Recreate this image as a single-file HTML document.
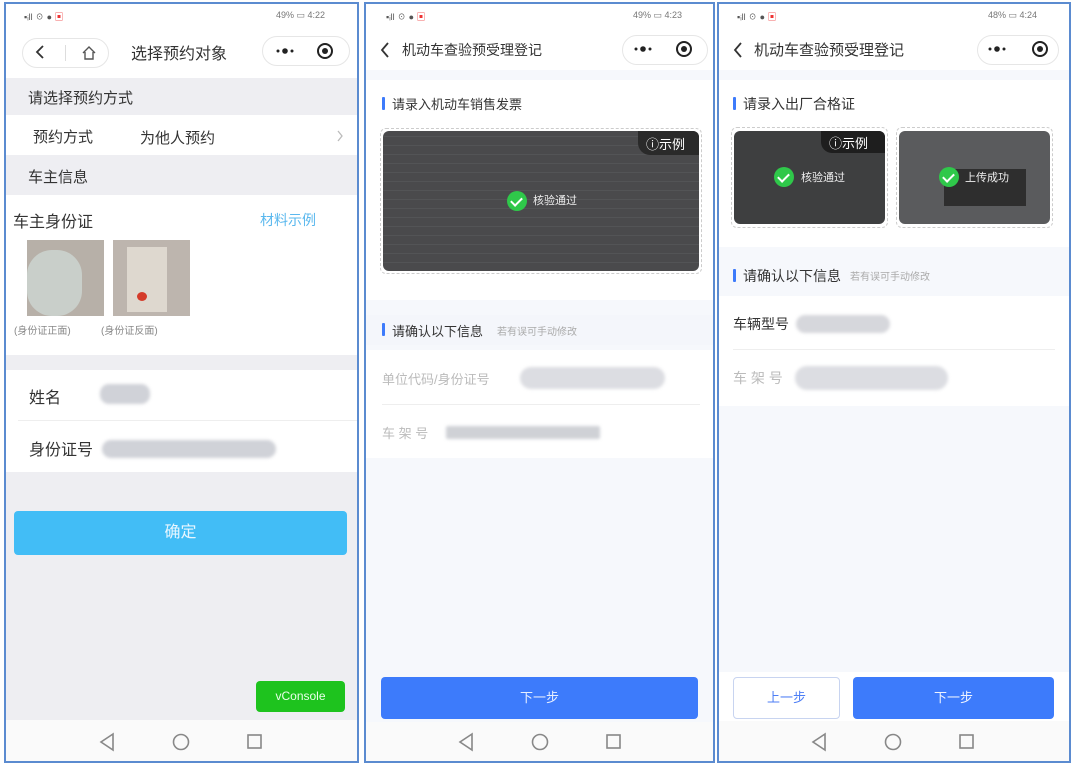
<!DOCTYPE html>
<html><head><meta charset="utf-8"><style>
*{margin:0;padding:0;box-sizing:border-box}
body{width:1077px;height:764px;background:#fff;position:relative;overflow:hidden;font-family:"Liberation Sans","Noto Sans CJK SC",sans-serif;color:#333}
.a{position:absolute}
.p{position:absolute;border:2px solid #5b8bd0;overflow:hidden}
.t{position:absolute;white-space:nowrap}
.blur{position:absolute;background:#d0d2d8;border-radius:9px;filter:blur(1.5px)}
.cap{position:absolute;height:30px;border:1px solid #e6e6e6;border-radius:15px;background:#fff}
.bar{position:absolute;width:3px;height:13px;background:#3d7bfb;border-radius:1px}
.chk{position:absolute;width:20px;height:20px;border-radius:50%;background:#2fc84a}
.chk:after{content:"";position:absolute;left:6px;top:4px;width:5px;height:9px;border:solid #fff;border-width:0 2px 2px 0;transform:rotate(45deg)}
</style></head><body>

<!-- PANEL 1 -->
<div class="p" style="left:4px;top:2px;width:355px;height:761px;background:#eeeef2"></div>
<div class="a" style="left:6px;top:4px;width:351px;height:74px;background:#fff"></div>
<div class="t" style="left:24px;top:10px;font-size:9px;color:#555">▪︎ᵢll ☉ ● <span style="color:#e33">▣</span></div>
<div class="t" style="left:276px;top:10px;font-size:9px;color:#777">49% ▭ 4:22</div>
<div class="cap" style="left:22px;top:38px;width:87px"></div>
<div class="a" style="left:65px;top:45px;width:1px;height:16px;background:#ddd"></div>
<div class="t" style="left:131px;top:40px;font-size:16px;color:#333">选择预约对象</div>
<div class="cap" style="left:262px;top:36px;width:88px"></div>
<div class="t" style="left:28px;top:87px;font-size:15px;color:#333">请选择预约方式</div>
<div class="a" style="left:6px;top:115px;width:351px;height:40px;background:#fff"></div>
<div class="t" style="left:33px;top:126px;font-size:15px">预约方式</div>
<div class="t" style="left:140px;top:127px;font-size:15px">为他人预约</div>
<div class="t" style="left:28px;top:166px;font-size:15px">车主信息</div>
<div class="a" style="left:6px;top:195px;width:351px;height:160px;background:#fff"></div>
<div class="t" style="left:13px;top:208px;font-size:16px">车主身份证</div>
<div class="t" style="left:260px;top:210px;font-size:14px;color:#5ab8ee">材料示例</div>
<div class="a" style="left:27px;top:240px;width:77px;height:76px;background:#b7b0a8"></div>
<div class="a" style="left:27px;top:250px;width:55px;height:66px;background:#c9cfca;border-radius:25px"></div>
<div class="a" style="left:113px;top:240px;width:77px;height:76px;background:#bdb5ae"></div>
<div class="a" style="left:127px;top:247px;width:40px;height:65px;background:#ded8cf"></div>
<div class="a" style="left:137px;top:292px;width:10px;height:9px;background:#d43b2a;border-radius:50%"></div>
<div class="t" style="left:14px;top:322px;font-size:10px;color:#888">(身份证正面)</div>
<div class="t" style="left:101px;top:322px;font-size:10px;color:#888">(身份证反面)</div>
<div class="a" style="left:6px;top:370px;width:351px;height:102px;background:#fff"></div>
<div class="a" style="left:18px;top:420px;width:339px;height:1px;background:#eee"></div>
<div class="t" style="left:29px;top:384px;font-size:16px">姓名</div>
<div class="blur" style="left:100px;top:384px;width:50px;height:20px"></div>
<div class="t" style="left:29px;top:436px;font-size:16px">身份证号</div>
<div class="blur" style="left:102px;top:440px;width:174px;height:18px"></div>
<div class="a" style="left:14px;top:511px;width:333px;height:44px;background:#42bdf6;border-radius:4px;color:#e8f6ff;font-size:16px;text-align:center;line-height:44px">确定</div>
<div class="a" style="left:256px;top:681px;width:89px;height:31px;background:#1ec31e;border-radius:4px;color:#e9ffe9;font-size:12px;text-align:center;line-height:31px">vConsole</div>
<div class="a" style="left:6px;top:720px;width:351px;height:41px;background:#fafafa"></div>

<!-- PANEL 2 -->
<div class="p" style="left:364px;top:2px;width:351px;height:761px;background:#f6f8fc"></div>
<div class="a" style="left:366px;top:4px;width:347px;height:66px;background:#fff"></div>
<div class="t" style="left:386px;top:10px;font-size:9px;color:#555">▪︎ᵢll ☉ ● <span style="color:#e33">▣</span></div>
<div class="t" style="left:633px;top:10px;font-size:9px;color:#777">49% ▭ 4:23</div>
<div class="t" style="left:402px;top:40px;font-size:14px;color:#333">机动车查验预受理登记</div>
<div class="cap" style="left:622px;top:35px;width:86px"></div>
<div class="a" style="left:366px;top:80px;width:347px;height:220px;background:#fff"></div>
<div class="bar" style="left:382px;top:97px"></div>
<div class="t" style="left:392px;top:94px;font-size:13px;color:#333">请录入机动车销售发票</div>
<div class="a" style="left:380px;top:128px;width:322px;height:146px;border:1px dashed #ccc;border-radius:6px"></div>
<div class="a" style="left:383px;top:131px;width:316px;height:140px;background:#4a4a4c;border-radius:6px;background-image:repeating-linear-gradient(0deg,#4a4a4c 0 8px,#535456 8px 9px)"></div>
<div class="a" style="left:638px;top:131px;width:61px;height:24px;background:#2a2a2a;border-radius:0 6px 0 12px"></div>
<div class="t" style="left:646px;top:134px;font-size:13px;color:#fff">ⓘ示例</div>
<div class="chk" style="left:507px;top:191px"></div>
<div class="t" style="left:533px;top:192px;font-size:11px;color:#eee">核验通过</div>
<div class="a" style="left:366px;top:315px;width:347px;height:30px;background:#f4f6fb"></div>
<div class="bar" style="left:382px;top:323px"></div>
<div class="t" style="left:392px;top:321px;font-size:13px;color:#333">请确认以下信息</div>
<div class="t" style="left:497px;top:323px;font-size:10px;color:#aaa">若有误可手动修改</div>
<div class="a" style="left:366px;top:350px;width:347px;height:108px;background:#fff"></div>
<div class="a" style="left:382px;top:404px;width:318px;height:1px;background:#eee"></div>
<div class="t" style="left:382px;top:369px;font-size:13px;color:#bbb">单位代码/身份证号</div>
<div class="blur" style="left:520px;top:367px;width:145px;height:22px;border-radius:11px;background:#dcdde2"></div>
<div class="t" style="left:382px;top:423px;font-size:13px;color:#bbb">车 架 号</div>
<div class="blur" style="left:446px;top:426px;width:154px;height:13px;border-radius:2px;background:#cfd1d6"></div>
<div class="a" style="left:381px;top:677px;width:317px;height:42px;background:#3d7bfb;border-radius:4px;color:#e6eeff;font-size:13px;text-align:center;line-height:42px">下一步</div>
<div class="a" style="left:366px;top:722px;width:347px;height:39px;background:#fafafa"></div>

<!-- PANEL 3 -->
<div class="p" style="left:717px;top:2px;width:354px;height:761px;background:#f6f8fc"></div>
<div class="a" style="left:719px;top:4px;width:350px;height:66px;background:#fff"></div>
<div class="t" style="left:737px;top:10px;font-size:9px;color:#555">▪︎ᵢll ☉ ● <span style="color:#e33">▣</span></div>
<div class="t" style="left:988px;top:10px;font-size:9px;color:#777">48% ▭ 4:24</div>
<div class="t" style="left:754px;top:39px;font-size:15px;color:#333">机动车查验预受理登记</div>
<div class="cap" style="left:977px;top:35px;width:82px"></div>
<div class="a" style="left:719px;top:80px;width:350px;height:167px;background:#fff"></div>
<div class="bar" style="left:733px;top:97px"></div>
<div class="t" style="left:743px;top:94px;font-size:14px;color:#333">请录入出厂合格证</div>
<div class="a" style="left:731px;top:127px;width:157px;height:101px;border:1px dashed #ccc;border-radius:6px"></div>
<div class="a" style="left:734px;top:131px;width:151px;height:93px;background:#3e3f40;border-radius:6px"></div>
<div class="a" style="left:821px;top:131px;width:64px;height:22px;background:#1e1e1e;border-radius:0 6px 0 11px"></div>
<div class="t" style="left:829px;top:133px;font-size:13px;color:#fff">ⓘ示例</div>
<div class="chk" style="left:774px;top:167px"></div>
<div class="t" style="left:801px;top:169px;font-size:11px;color:#eee">核验通过</div>
<div class="a" style="left:896px;top:127px;width:157px;height:101px;border:1px dashed #ccc;border-radius:6px"></div>
<div class="a" style="left:899px;top:131px;width:151px;height:93px;background:#5a5b5d;border-radius:6px"></div>
<div class="a" style="left:944px;top:169px;width:82px;height:37px;background:#2e2e2e"></div>
<div class="chk" style="left:939px;top:167px"></div>
<div class="t" style="left:965px;top:169px;font-size:11px;color:#eee">上传成功</div>
<div class="bar" style="left:733px;top:269px"></div>
<div class="t" style="left:743px;top:266px;font-size:14px;color:#333">请确认以下信息</div>
<div class="t" style="left:850px;top:268px;font-size:10px;color:#aaa">若有误可手动修改</div>
<div class="a" style="left:719px;top:296px;width:350px;height:110px;background:#fff"></div>
<div class="a" style="left:733px;top:349px;width:322px;height:1px;background:#eee"></div>
<div class="t" style="left:733px;top:314px;font-size:14px;color:#333">车辆型号</div>
<div class="blur" style="left:796px;top:315px;width:94px;height:18px;background:#d6d7dc"></div>
<div class="t" style="left:733px;top:368px;font-size:14px;color:#bbb">车 架 号</div>
<div class="blur" style="left:795px;top:366px;width:153px;height:24px;border-radius:12px;background:#dcdde2"></div>
<div class="a" style="left:719px;top:672px;width:350px;height:49px;background:#fff"></div>
<div class="a" style="left:733px;top:677px;width:107px;height:42px;border:1px solid #c8d4f0;border-radius:4px;color:#4d7ef5;font-size:13px;text-align:center;line-height:40px;background:#fff">上一步</div>
<div class="a" style="left:853px;top:677px;width:201px;height:42px;background:#3d7bfb;border-radius:4px;color:#eef3ff;font-size:13px;text-align:center;line-height:42px">下一步</div>
<div class="a" style="left:719px;top:721px;width:350px;height:40px;background:#fafafa"></div>

<!-- header icons -->
<svg class="a" style="left:0;top:0" width="1077" height="160" viewBox="0 0 1077 160" fill="none" stroke="#333" stroke-width="1.8">
<path d="M43 46 L37 52 L43 58"/>
<path d="M83 53 L89 47 L95 53 M85 52 V59 H93 V52" stroke="#555" stroke-width="1.4"/>
<path d="M388 43 L382 50 L388 57"/>
<path d="M741 43 L735 50 L741 57"/>
<g fill="#222" stroke="none">
<circle cx="278" cy="51" r="1.5"/><circle cx="285" cy="51" r="2.8"/><circle cx="292" cy="51" r="1.5"/>
<circle cx="325" cy="51" r="3"/>
<circle cx="636" cy="49" r="1.5"/><circle cx="643" cy="49" r="2.8"/><circle cx="650" cy="49" r="1.5"/>
<circle cx="684" cy="49" r="3"/>
<circle cx="990" cy="49" r="1.5"/><circle cx="997" cy="49" r="2.8"/><circle cx="1004" cy="49" r="1.5"/>
<circle cx="1040" cy="49" r="3"/>
</g>
<circle cx="325" cy="51" r="7" stroke="#222" stroke-width="2"/>
<circle cx="684" cy="49" r="7" stroke="#222" stroke-width="2"/>
<circle cx="1040" cy="49" r="7" stroke="#222" stroke-width="2"/>
<path d="M338 131 L342 136 L338 141" stroke="#bbb" stroke-width="1.3"/>
</svg>

<!-- nav icons -->
<svg class="a" style="left:0;top:730px" width="1077" height="24" viewBox="0 0 1077 24" fill="none" stroke="#888" stroke-width="1.6">
<path d="M113 4 L101 12 L113 20 Z"/><circle cx="181" cy="12" r="7.5"/><rect x="248" y="5" width="13" height="13"/>
<path d="M472 4 L460 12 L472 20 Z"/><circle cx="540" cy="12" r="7.5"/><rect x="607" y="5" width="13" height="13"/>
<path d="M825 4 L813 12 L825 20 Z"/><circle cx="893" cy="12" r="7.5"/><rect x="960" y="5" width="13" height="13"/>
</svg>
</body></html>
